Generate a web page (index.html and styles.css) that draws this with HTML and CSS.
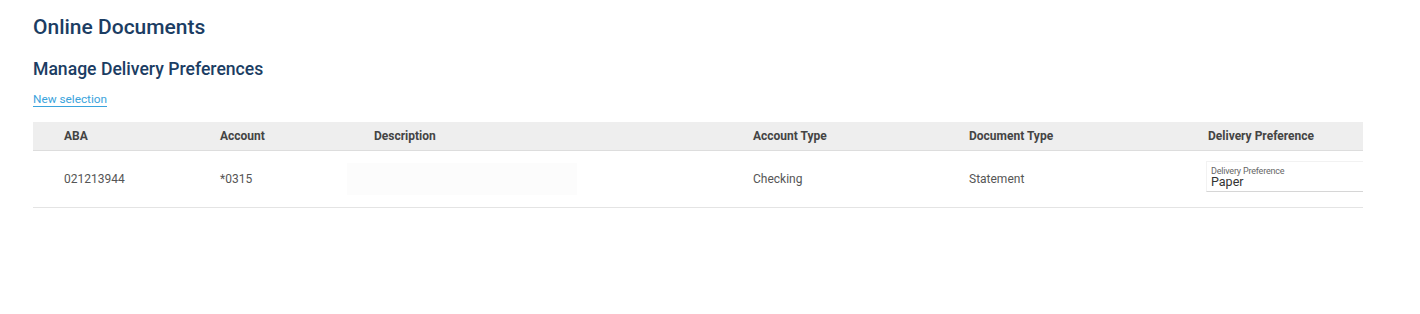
FILE: index.html
```html
<html>

<head>
  <link rel="stylesheet" href="styles.css">
</head>

<body>
  <div class="page">
    <h1 class="title">Online Documents</h1>
    <h2 class="subtitle">Manage Delivery Preferences</h2>
    <a class="new-selection" href="#">New selection</a>

    <div class="table">
      <div class="row head">
        <div class="cell">ABA</div>
        <div class="cell">Account</div>
        <div class="cell">Description</div>
        <div class="cell">Account Type</div>
        <div class="cell">Document Type</div>
        <div class="cell">Delivery Preference</div>
      </div>
      <div class="row body">
        <div class="cell">021213944</div>
        <div class="cell">*0315</div>
        <div class="cell desc"><div class="desc-box"></div></div>
        <div class="cell">Checking</div>
        <div class="cell">Statement</div>
        <div class="cell pref">
          <div class="field">
            <span class="field-label">Delivery Preference</span>
            <span class="field-value">Paper</span>
          </div>
        </div>
      </div>
    </div>
  </div>
</body>

</html>
```

FILE: styles.css
```css
* {
  margin: 0;
  padding: 0;
  box-sizing: border-box;
}

body {
  margin: 0;
  background: #ffffff;
  font-family: Roboto, "Liberation Sans", sans-serif;
  color: #5a5a5a;
}

.page {
  padding: 15px 57px 0 33px;
}

.title {
  font-size: 21px;
  font-weight: 500;
  color: #1b3d63;
  line-height: 25px;
}

.subtitle {
  margin-top: 18px;
  font-size: 17.6px;
  font-weight: 500;
  color: #1b3d63;
  line-height: 22px;
}

.new-selection {
  display: inline-block;
  margin-top: 12px;
  font-size: 11.8px;
  line-height: 14px;
  color: #3aa3dc;
  text-decoration: none;
  border-bottom: 1px solid #3aa3dc;
}

.table {
  margin-top: 15px;
}

.row {
  display: grid;
  grid-template-columns: 156px 154px 379px 216px 239px 186px;
  align-items: center;
}

.head {
  height: 29px;
  background: #eeeeee;
  border-bottom: 1px solid #dddddd;
  font-size: 12px;
  font-weight: 700;
  color: #444444;
}

.body {
  height: 57px;
  border-bottom: 1px solid #e4e4e4;
  font-size: 12px;
  color: #555555;
}

.cell {
  padding-left: 31px;
}

.desc {
  padding-left: 4px;
}

.desc-box {
  width: 230px;
  height: 32px;
  background: #fcfcfc;
}

.pref {
  align-self: start;
  padding-left: 29px;
  padding-top: 10px;
}

.field {
  display: flex;
  flex-direction: column;
  height: 31px;
  padding: 4px 0 0 4px;
  border-top: 1px solid #f2f2f2;
  border-left: 1px solid #f2f2f2;
  border-bottom: 1px solid #d6d6d6;
}

.field-label {
  font-size: 9px;
  line-height: 10px;
  letter-spacing: -0.2px;
  color: #666666;
}

.field-value {
  font-size: 12.5px;
  line-height: 12px;
  color: #333333;
}
```
